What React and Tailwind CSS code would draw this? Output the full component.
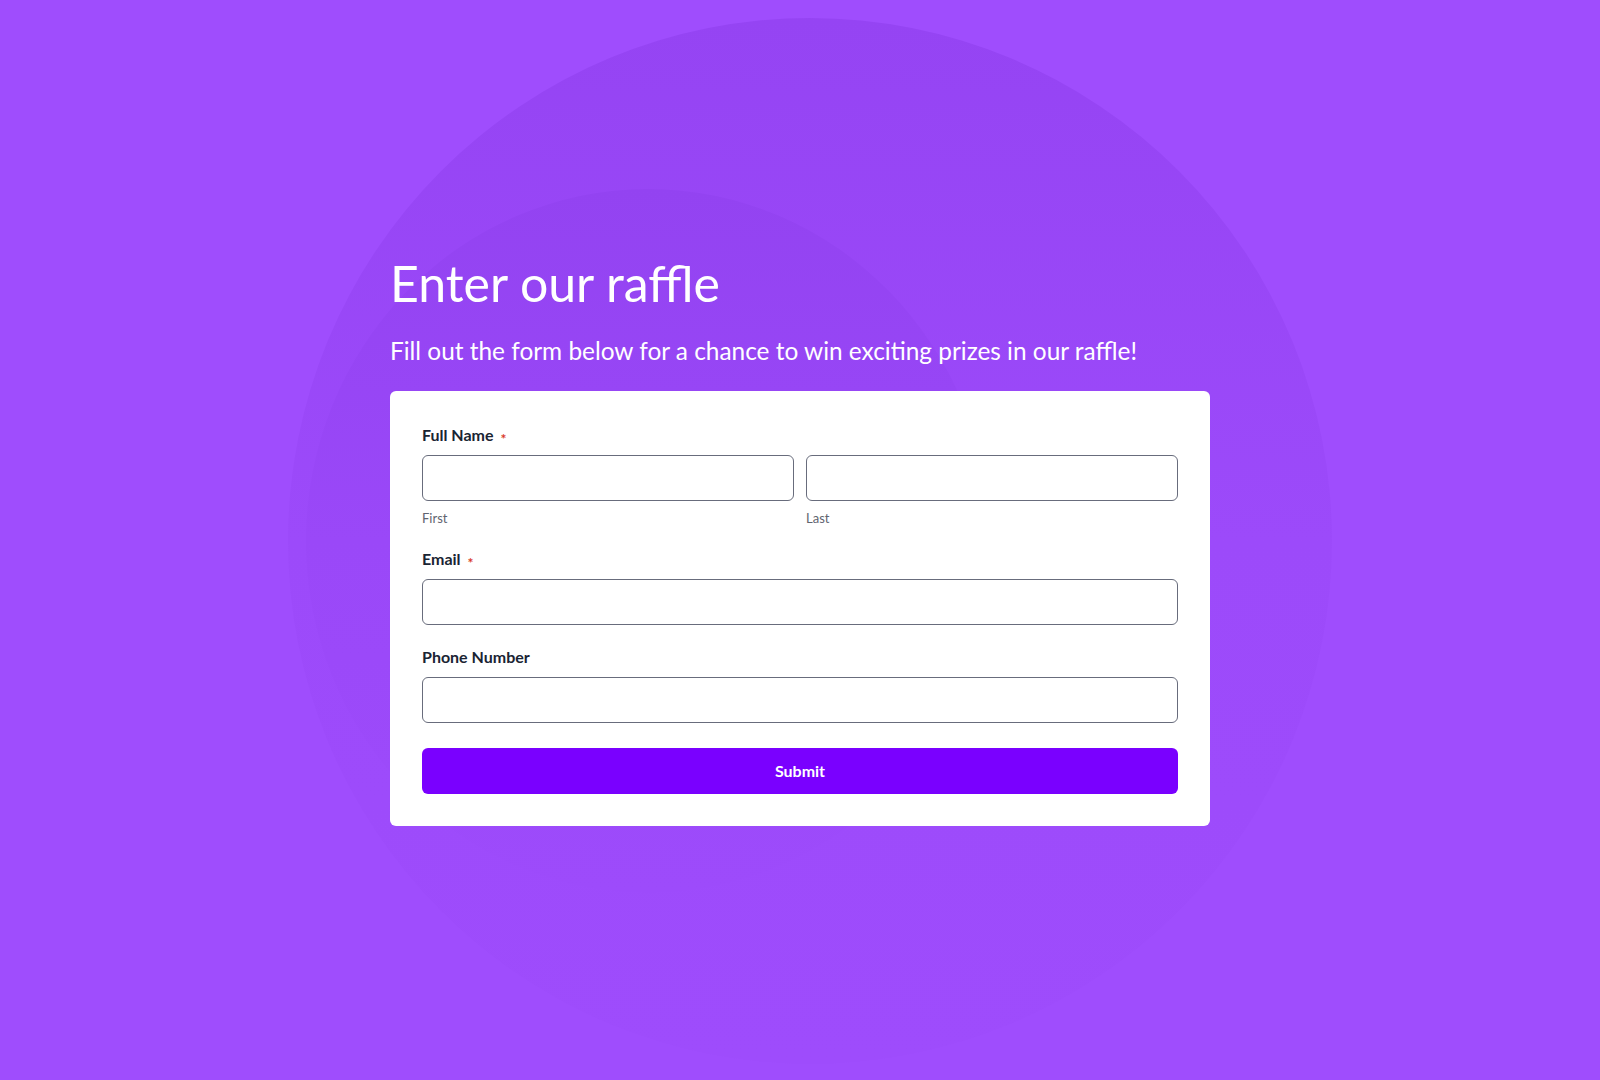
import React from "react";

function Label({ children, required }) {
  return (
    <div className="flex items-center h-6 text-[16px] leading-6 font-bold text-[#1a2433]">
      <span>{children}</span>
      {required && (
        <span className="ml-[7px] text-[14px] text-[#d93a2b] leading-none relative top-[4px]">*</span>
      )}
    </div>
  );
}

function Input() {
  return (
    <input
      type="text"
      className="block w-full h-[46px] rounded-[6px] border border-[#686c7c] bg-white px-3 outline-none"
    />
  );
}

export default function App() {
  return (
    <div
      className="relative min-h-[1080px] w-full overflow-hidden bg-[#9f4dfd]"
      style={{ fontFamily: "Lato, 'Open Sans', sans-serif" }}
    >
      {/* decorative background ellipses */}
      <div className="pointer-events-none absolute left-[288px] top-[18px] h-[1046px] w-[1044px] rounded-[50%] bg-linear-to-b from-[#9544f3] via-[#9c4afa] to-[#9e4cfc]" />
      <div className="pointer-events-none absolute left-[306px] top-[189px] h-[704px] w-[684px] rounded-[50%] bg-linear-to-b from-[#9343f1] via-[#9a48f8] to-[#9d4bfb]" />

      <div className="relative mx-auto w-[820px] pt-[253px]">
        <h1 className="text-[50px] leading-[1.2] font-normal text-white">
          Enter our raffle
        </h1>
        <p className="mt-[23px] text-[24.4px] leading-[1.2] text-white">
          Fill out the form below for a chance to win exciting prizes in our raffle!
        </p>

        <div className="mt-[26px] rounded-[6px] bg-white p-8">
          <div className="flex flex-col gap-5">
            <div>
              <Label required>Full Name</Label>
              <div className="mt-2 grid grid-cols-2 gap-3">
                <div>
                  <Input />
                  <div className="mt-2 text-[13px] leading-[18px] text-[#5f6470]">First</div>
                </div>
                <div>
                  <Input />
                  <div className="mt-2 text-[13px] leading-[18px] text-[#5f6470]">Last</div>
                </div>
              </div>
            </div>

            <div>
              <Label required>Email</Label>
              <div className="mt-2">
                <Input />
              </div>
            </div>

            <div>
              <Label>Phone Number</Label>
              <div className="mt-2">
                <Input />
              </div>
            </div>
          </div>

          <button
            type="button"
            className="mt-[25px] flex h-[46px] w-full items-center justify-center rounded-[6px] bg-[#7a00ff] text-[16px] font-bold text-white"
          >
            Submit
          </button>
        </div>
      </div>
    </div>
  );
}
